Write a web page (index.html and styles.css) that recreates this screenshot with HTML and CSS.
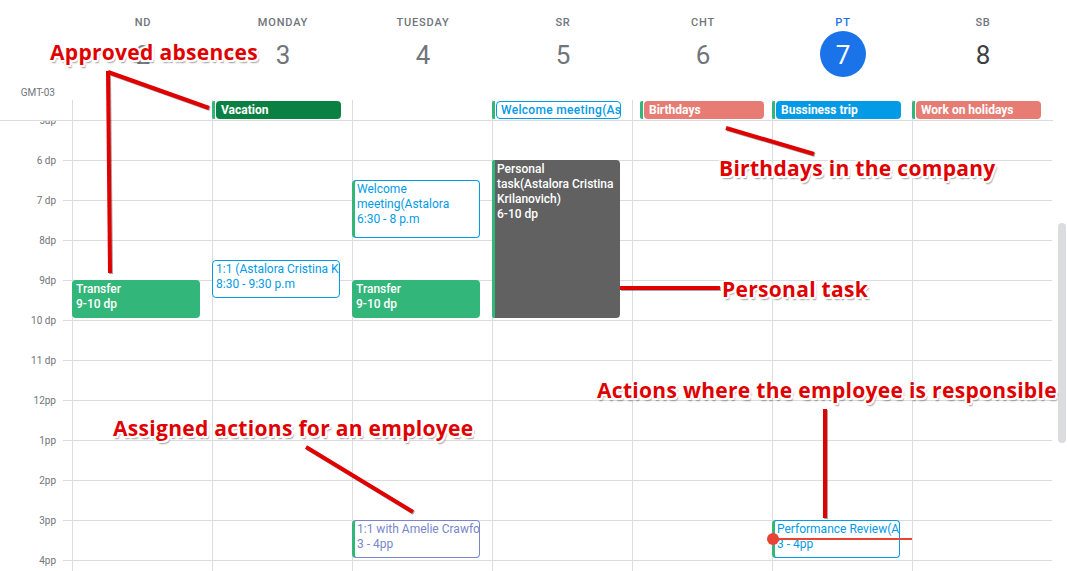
FILE: index.html
```html
<!DOCTYPE html>
<html lang="en">
<head>
<meta charset="utf-8">
<title>Calendar</title>
<link rel="stylesheet" href="styles.css">
</head>
<body>
<div class="page">
  <div class="cal">
    <div class="head">
      <div class="gutter-top"><span class="tz">GMT-03</span></div>
      <div class="dayhead"><span class="dname">ND</span><span class="dnum">2</span></div>
      <div class="dayhead"><span class="dname">Monday</span><span class="dnum">3</span></div>
      <div class="dayhead"><span class="dname">Tuesday</span><span class="dnum">4</span></div>
      <div class="dayhead"><span class="dname">SR</span><span class="dnum">5</span></div>
      <div class="dayhead"><span class="dname">CHT</span><span class="dnum">6</span></div>
      <div class="dayhead today"><span class="dname">PT</span><span class="dnum">7</span></div>
      <div class="dayhead sat"><span class="dname">SB</span><span class="dnum">8</span></div>

      <div class="allgut"></div>
      <div class="allday"></div>
      <div class="allday"><div class="ad"><span class="stripe"></span><span class="box dkgreen">Vacation</span></div></div>
      <div class="allday"></div>
      <div class="allday"><div class="ad"><span class="stripe"></span><span class="box outline">Welcome meeting(Astalora Cristina Krilanovich)</span></div></div>
      <div class="allday"><div class="ad bday"><span class="stripe"></span><span class="box coral">Birthdays</span></div></div>
      <div class="allday"><div class="ad"><span class="stripe"></span><span class="box blue">Bussiness trip</span></div></div>
      <div class="allday"><div class="ad"><span class="stripe"></span><span class="box coral">Work on holidays</span></div></div>
    </div>

    <div class="body">
      <div class="gutter">
        <div class="slot"><span class="lbl">5dp</span><span class="tick"></span></div>
        <div class="slot"><span class="lbl">6 dp</span><span class="tick"></span></div>
        <div class="slot"><span class="lbl">7 dp</span><span class="tick"></span></div>
        <div class="slot"><span class="lbl">8dp</span><span class="tick"></span></div>
        <div class="slot"><span class="lbl">9dp</span><span class="tick"></span></div>
        <div class="slot"><span class="lbl">10 dp</span><span class="tick"></span></div>
        <div class="slot"><span class="lbl">11 dp</span><span class="tick"></span></div>
        <div class="slot"><span class="lbl">12pp</span><span class="tick"></span></div>
        <div class="slot"><span class="lbl">1pp</span><span class="tick"></span></div>
        <div class="slot"><span class="lbl">2pp</span><span class="tick"></span></div>
        <div class="slot"><span class="lbl">3pp</span><span class="tick"></span></div>
        <div class="slot"><span class="lbl">4pp</span><span class="tick"></span></div>
      </div>

      <div class="col">
        <div class="ev green" style="top:160px;height:38px"><div class="t">Transfer</div><div>9-10 dp</div></div>
      </div>
      <div class="col">
        <div class="ev outline" style="top:140px;height:38px"><div class="t nw">1:1 (Astalora Cristina Krilanovich)</div><div>8:30 - 9:30 p.m</div></div>
      </div>
      <div class="col">
        <div class="ev outline striped" style="top:60px;height:58px"><div class="t">Welcome meeting(Astalora</div><div>6:30 - 8 p.m</div></div>
        <div class="ev green" style="top:160px;height:38px"><div class="t">Transfer</div><div>9-10 dp</div></div>
        <div class="ev outline striped lav" style="top:400px;height:38px"><div class="t nw">1:1 with Amelie Crawford</div><div>3 - 4pp</div></div>
      </div>
      <div class="col">
        <div class="ev grey striped" style="top:40px;height:158px"><div class="t">Personal task(Astalora Cristina Krilanovich)</div><div>6-10 dp</div></div>
      </div>
      <div class="col"></div>
      <div class="col">
        <div class="ev outline striped" style="top:400px;height:38px"><div class="t nw">Performance Review(Astalora Cristina Krilanovich)</div><div>3 - 4pp</div></div>
        <div class="now" style="top:418px"></div>
      </div>
      <div class="col"></div>
    </div>
  </div>
  <div class="track"><div class="thumb"></div></div>
</div>

<div class="notes">
  <svg class="lines" width="1067" height="571" viewBox="0 0 1067 571">
    <g stroke="#e00000" stroke-width="4" fill="none" stroke-linecap="butt">
      <line x1="108" y1="72" x2="209" y2="108"/>
      <line x1="108" y1="71" x2="110" y2="273"/>
      <line x1="726" y1="128" x2="814" y2="154"/>
      <line x1="620" y1="288" x2="720" y2="288"/>
      <line x1="825" y1="409" x2="825" y2="518"/>
      <line x1="306" y1="447" x2="413" y2="512"/>
    </g>
  </svg>
  <span class="note" style="left:50px;top:42px">Approved absences</span>
  <span class="note" style="left:719px;top:158px">Birthdays in the company</span>
  <span class="note" style="left:722px;top:279px">Personal task</span>
  <span class="note" style="left:597px;top:380px">Actions where the employee is responsible</span>
  <span class="note" style="left:113px;top:418px">Assigned actions for an employee</span>
</div>
</body>
</html>
```

FILE: styles.css
```css
* { box-sizing: border-box; }
html, body { margin: 0; background: #fff; }
body {
  font-family: Roboto, "Liberation Sans", Arial, sans-serif;
  width: 1067px;
  height: 571px;
  overflow: hidden;
  position: relative;
  color: #3c4043;
}
.page { display: flex; height: 571px; }
.cal { width: 1053px; flex: none; display: flex; flex-direction: column; }

/* header */
.head {
  display: grid;
  grid-template-columns: 72px repeat(7, 140px);
  grid-template-rows: 100px 20px;
  border-bottom: 1px solid #dadce0;
  flex: none;
}
.gutter-top {
  display: flex;
  align-items: flex-end;
  justify-content: flex-end;
  padding: 0 17px 1px 0;
}
.tz { font-size: 10px; line-height: 12px; color: #70757a; }
.dayhead {
  display: flex;
  flex-direction: column;
  align-items: center;
  padding: 16px 0 0 2px;
}
.dname {
  font-size: 11px;
  line-height: 14px;
  font-weight: 500;
  letter-spacing: 0.8px;
  text-transform: uppercase;
  color: #70757a;
}
.dnum {
  margin-top: 1px;
  width: 46px;
  height: 46px;
  border-radius: 50%;
  font-size: 26px;
  line-height: 48px;
  text-align: center;
  color: #70757a;
}
.today .dname { color: #1a73e8; }
.today .dnum { background: #1a73e8; color: #fff; }
.sat .dnum { color: #3c4043; }

.allday { border-left: 1px solid #dadce0; padding-top: 1px; }
.ad { display: flex; height: 18px; width: 129px; margin-left: -1px; }
.ad.bday { margin-left: 7px; width: 124px; }
.stripe { width: 3px; flex: none; background: #33b679; border-radius: 2px 0 0 2px; }
.box {
  flex: 1;
  min-width: 0;
  margin-left: 1px;
  border-radius: 4px;
  padding: 0 5px;
  font-size: 12px;
  line-height: 18px;
  font-weight: 700;
  white-space: nowrap;
  overflow: hidden;
  color: #fff;
}
.box.dkgreen { background: #0b8043; }
.box.coral { background: #e67c73; }
.box.blue { background: #039be5; }
.box.outline {
  background: #fff;
  border: 1px solid #039be5;
  color: #039be5;
  font-weight: 500;
  letter-spacing: 0.3px;
  line-height: 16px;
  padding: 0 4px;
}

/* body */
.body {
  flex: 1;
  display: grid;
  grid-template-columns: 72px repeat(7, 140px);
  align-items: start;
  overflow: hidden;
}
.gutter { margin-top: -1px; display: flex; flex-direction: column; }
.slot { height: 40px; flex: none; display: flex; align-items: flex-start; }
.lbl {
  width: 63px;
  padding-right: 7px;
  margin-top: -5px;
  text-align: right;
  font-size: 10px;
  line-height: 12px;
  color: #70757a;
}
.tick { width: 9px; border-top: 1px solid #dadce0; }

.col {
  margin-top: -1px;
  height: 480px;
  position: relative;
  border-left: 1px solid #dadce0;
  background: repeating-linear-gradient(to bottom, #dadce0 0 1px, transparent 1px 40px);
}

.ev {
  position: absolute;
  left: -1px;
  width: 128px;
  border-radius: 4px;
  padding: 2px 4px 0;
  font-size: 12px;
  line-height: 15px;
  overflow: hidden;
}
.ev .nw { white-space: nowrap; }
.ev.green { background: #33b679; color: #fff; font-weight: 500; }
.ev.grey { background: #616161; color: #fff; font-weight: 500; }
.ev.outline {
  background: #fff;
  border: 1px solid #039be5;
  color: #039be5;
  padding: 1px 3px 0;
}
.ev.striped { border-left: 3px solid #33b679; padding-left: 2px; }
.ev.grey.striped { border-radius: 2px 4px 4px 2px; }
.ev.lav { border-color: #7986cb; border-left-color: #33b679; color: #7986cb; }

.now {
  position: absolute;
  left: 0;
  right: 0;
  height: 2px;
  background: #ea4335;
  z-index: 2;
}
.now::before {
  content: "";
  position: absolute;
  left: -6px;
  top: -5px;
  width: 12px;
  height: 12px;
  border-radius: 50%;
  background: #ea4335;
}

.track { flex: 1; padding-left: 5px; }
.thumb {
  width: 8px;
  height: 220px;
  margin-top: 223px;
  background: #dadce0;
  border-radius: 4px;
}

/* annotations */
.notes { position: absolute; left: 0; top: 0; width: 1067px; height: 571px; pointer-events: none; }
.lines { position: absolute; left: 0; top: 0; filter: drop-shadow(1px 1px 0.5px rgba(0,0,0,0.35)); }
.note {
  position: absolute;
  white-space: nowrap;
  font-family: "Open Sans", "Liberation Sans", sans-serif;
  font-weight: 700;
  font-size: 21px;
  line-height: 21px;
  letter-spacing: 0.3px;
  color: #e00000;
  text-shadow:
    -2px 0 0 #fff, 2px 0 0 #fff, 0 -2px 0 #fff, 0 2px 0 #fff,
    -1.5px -1.5px 0 #fff, 1.5px -1.5px 0 #fff, -1.5px 1.5px 0 #fff, 1.5px 1.5px 0 #fff,
    0 0 3px #fff, 0 0 4px #fff, 0 0 4px #fff,
    2px 2.5px 1.5px rgba(0,0,0,0.45);
}
```
